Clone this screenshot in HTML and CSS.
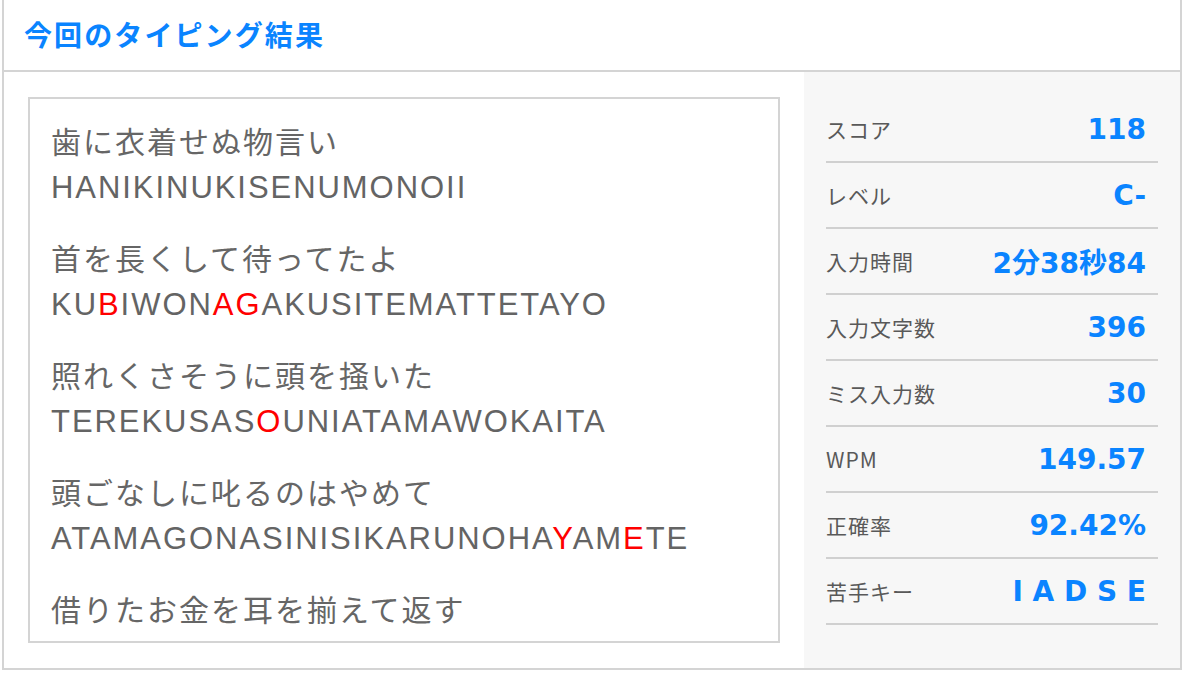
FILE: index.html
```html
<!DOCTYPE html>
<html lang="ja">
<head>
<meta charset="utf-8">
<title>今回のタイピング結果</title>
<link rel="stylesheet" href="styles.css">
</head>
<body>
<div class="panel">
  <div class="head">
    <h2 class="title">今回のタイピング結果</h2>
  </div>
  <div class="body">
    <div class="main">
      <div class="words">
        <div class="item">
          <div class="jp">歯に衣着せぬ物言い</div>
          <div class="ro">HANIKINUKISENUMONOII</div>
        </div>
        <div class="item">
          <div class="jp">首を長くして待ってたよ</div>
          <div class="ro">KU<span class="miss">B</span>IWON<span class="miss">AG</span>AKUSITEMATTETAYO</div>
        </div>
        <div class="item">
          <div class="jp">照れくさそうに頭を掻いた</div>
          <div class="ro">TEREKUSAS<span class="miss">O</span>UNIATAMAWOKAITA</div>
        </div>
        <div class="item">
          <div class="jp">頭ごなしに叱るのはやめて</div>
          <div class="ro">ATAMAGONASINISIKARUNOHA<span class="miss">Y</span>AM<span class="miss">E</span>TE</div>
        </div>
        <div class="item">
          <div class="jp">借りたお金を耳を揃えて返す</div>
        </div>
      </div>
    </div>
    <aside class="stats">
      <div class="row"><span class="label">スコア</span><span class="value">118</span></div>
      <div class="row"><span class="label">レベル</span><span class="value">C-</span></div>
      <div class="row"><span class="label">入力時間</span><span class="value">2分38秒84</span></div>
      <div class="row"><span class="label">入力文字数</span><span class="value">396</span></div>
      <div class="row"><span class="label">ミス入力数</span><span class="value">30</span></div>
      <div class="row"><span class="label">WPM</span><span class="value">149.57</span></div>
      <div class="row"><span class="label">正確率</span><span class="value">92.42%</span></div>
      <div class="row"><span class="label">苦手キー</span><span class="value">I A D S E</span></div>
    </aside>
  </div>
</div>
</body>
</html>
```

FILE: styles.css
```css
* {
  box-sizing: border-box;
}

html, body {
  margin: 0;
  padding: 0;
  background: #ffffff;
}

body {
  font-family: "Noto Sans CJK JP", "Liberation Sans", sans-serif;
  color: #666666;
}

.panel {
  margin: 0 2px;
  width: 1180px;
  border: 2px solid #d4d4d4;
  border-top: none;
  background: #ffffff;
}

.head {
  height: 72px;
  border-bottom: 2px solid #d4d4d4;
  display: flex;
  align-items: center;
  padding-left: 20px;
  padding-bottom: 2px;
}

.title {
  margin: 0;
  font-family: "Noto Sans CJK JP", sans-serif;
  font-size: 28px;
  font-weight: 700;
  letter-spacing: 2.1px;
  line-height: 1;
  color: #0a84ff;
}

.body {
  display: flex;
}

.main {
  width: 800px;
  padding: 25px 24px;
  background: #ffffff;
}

.words {
  height: 546px;
  border: 2px solid #d4d4d4;
  padding: 18px 21px 0 21px;
  overflow: hidden;
}

.item {
  margin-bottom: 23px;
}

.jp {
  font-family: "Noto Sans CJK JP", sans-serif;
  font-size: 30px;
  letter-spacing: 2px;
  line-height: 47px;
  color: #666666;
  white-space: nowrap;
}

.ro {
  font-family: "Liberation Sans", Arial, sans-serif;
  font-size: 31px;
  letter-spacing: 1.95px;
  line-height: 47px;
  color: #646464;
  white-space: nowrap;
}

.miss {
  color: #ff0000;
}

.stats {
  width: 376px;
  background: #f7f7f7;
  padding: 25px 22px;
}

.row {
  height: 66px;
  border-bottom: 2px solid #d0d0d0;
  display: flex;
  align-items: center;
  justify-content: space-between;
  padding-right: 12px;
}

.label {
  font-family: "Noto Sans CJK JP", sans-serif;
  font-size: 21px;
  letter-spacing: 1px;
  color: #595959;
}

.value {
  font-family: "DejaVu Sans", "Noto Sans CJK JP", sans-serif;
  font-size: 28px;
  font-weight: 700;
  color: #0a84ff;
  white-space: pre;
}
```
